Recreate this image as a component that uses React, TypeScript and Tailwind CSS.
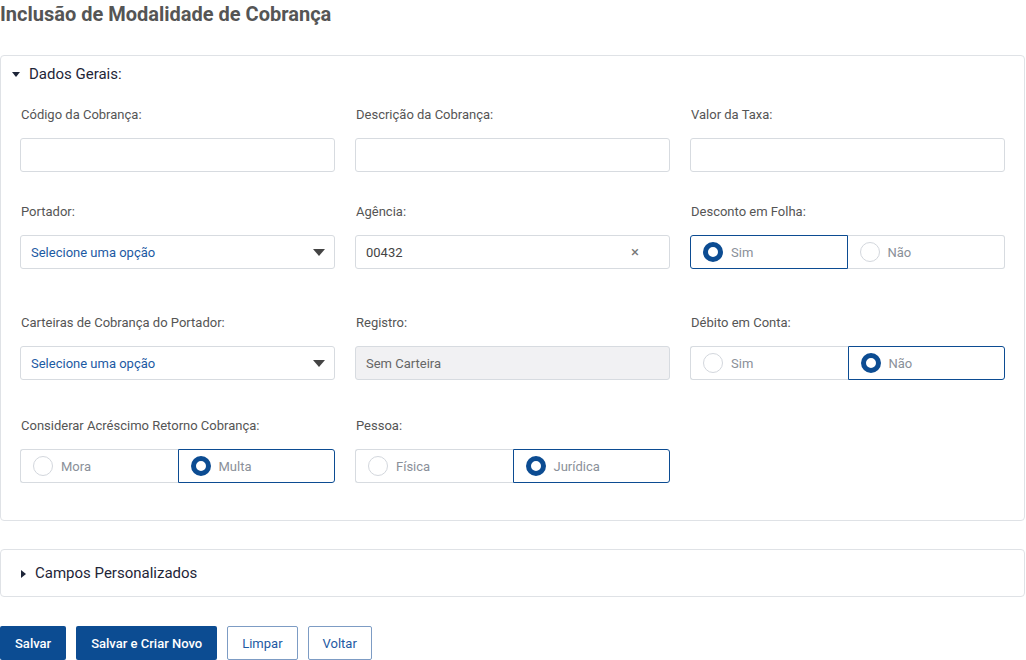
import { useState } from 'react';

type Option = { value: string; label: string };

const BLUE = '#0c4c92';

function Label({ children }: { children: React.ReactNode }) {
  return (
    <label className="block h-4 pl-[1px] text-[13px] leading-4 text-[#555]">
      {children}
    </label>
  );
}

function TextInput({ value = '', disabled }: { value?: string; disabled?: boolean }) {
  return (
    <div
      className={`mt-[15px] flex h-[34px] items-center rounded-[3px] border border-[#d7dbe0] px-[10px] pt-[1px] text-[13px] ${
        disabled ? 'bg-[#f1f1f3] text-[#666]' : 'bg-white text-[#444]'
      }`}
    >
      {value}
    </div>
  );
}

function ClearInput({ value }: { value: string }) {
  return (
    <div className="mt-[15px] flex h-[34px] items-center justify-between rounded-[3px] border border-[#d7dbe0] bg-white pl-[10px] pr-[30px] pt-[1px] text-[13px] text-[#444]">
      <span>{value}</span>
      <span className="text-[15px] leading-none text-[#777]">×</span>
    </div>
  );
}

function Select({ placeholder }: { placeholder: string }) {
  return (
    <div className="mt-[15px] flex h-[34px] items-center justify-between rounded-[3px] border border-[#d7dbe0] bg-white pl-[10px] pr-[9px] pt-[1px] text-[13px] text-[#1d5aa3]">
      <span>{placeholder}</span>
      <svg width="12" height="7" viewBox="0 0 12 7">
        <path d="M0 0h12L6 7z" fill="#444" />
      </svg>
    </div>
  );
}

function Radio({ checked }: { checked: boolean }) {
  return checked ? (
    <span className="h-[20px] w-[20px] shrink-0 rounded-full border-[5px] border-[#0c4c92] bg-white" />
  ) : (
    <span className="h-[20px] w-[20px] shrink-0 rounded-full border border-[#d3d7dd] bg-white" />
  );
}

function RadioGroup({ options, initial }: { options: Option[]; initial: string }) {
  const [value, setValue] = useState(initial);
  return (
    <div className="mt-[15px] grid h-[34px] grid-cols-2 text-[13px] text-[#8a9099]">
      {options.map((opt, i) => {
        const checked = opt.value === value;
        return (
          <button
            key={opt.value}
            type="button"
            onClick={() => setValue(opt.value)}
            className={`flex items-center gap-[8px] border pl-[12px] ${
              i === 0 ? 'rounded-l-[3px]' : 'rounded-r-[3px]'
            } ${
              checked
                ? 'border-[#0c4c92]'
                : i === 0
                  ? 'border-[#d7dbe0] border-r-0'
                  : 'border-[#d7dbe0] border-l-0'
            }`}
          >
            <Radio checked={checked} />
            <span className="pt-[2px]">{opt.label}</span>
          </button>
        );
      })}
    </div>
  );
}

const simNao: Option[] = [
  { value: 'S', label: 'Sim' },
  { value: 'N', label: 'Não' },
];

export default function App() {
  const [geraisOpen, setGeraisOpen] = useState(true);

  return (
    <div className="h-[660px] w-[1026px] overflow-hidden bg-white font-['Roboto',sans-serif]">
      <h1 className="h-[30px] text-[20px] font-bold leading-[28px] text-[#555]">
        Inclusão de Modalidade de Cobrança
      </h1>

      <section className="mt-[25px] w-[1025px] rounded-[4px] border border-[#dfe2e6]">
        <button
          type="button"
          onClick={() => setGeraisOpen((o) => !o)}
          className="mt-2 flex h-[20px] items-center gap-[9px] pl-[11px] pt-[1px] text-[15px] text-[#1e2538]"
        >
          <svg width="8" height="5" viewBox="0 0 8 5">
            <path d="M0 0h8L4 5z" fill="#1e2538" />
          </svg>
          Dados Gerais:
        </button>

        {geraisOpen && (
          <div className="px-[19px] pb-[37px] pt-[23px]">
            <div className="grid grid-cols-3 gap-x-5">
              <div>
                <Label>Código da Cobrança:</Label>
                <TextInput />
              </div>
              <div>
                <Label>Descrição da Cobrança:</Label>
                <TextInput />
              </div>
              <div>
                <Label>Valor da Taxa:</Label>
                <TextInput />
              </div>
            </div>

            <div className="mt-[32px] grid grid-cols-3 gap-x-5">
              <div>
                <Label>Portador:</Label>
                <Select placeholder="Selecione uma opção" />
              </div>
              <div>
                <Label>Agência:</Label>
                <ClearInput value="00432" />
              </div>
              <div>
                <Label>Desconto em Folha:</Label>
                <RadioGroup options={simNao} initial="S" />
              </div>
            </div>

            <div className="mt-[46px] grid grid-cols-3 gap-x-5">
              <div>
                <Label>Carteiras de Cobrança do Portador:</Label>
                <Select placeholder="Selecione uma opção" />
              </div>
              <div>
                <Label>Registro:</Label>
                <TextInput value="Sem Carteira" disabled />
              </div>
              <div>
                <Label>Débito em Conta:</Label>
                <RadioGroup options={simNao} initial="N" />
              </div>
            </div>

            <div className="mt-[38px] grid grid-cols-3 gap-x-5">
              <div>
                <Label>Considerar Acréscimo Retorno Cobrança:</Label>
                <RadioGroup
                  options={[
                    { value: 'mora', label: 'Mora' },
                    { value: 'multa', label: 'Multa' },
                  ]}
                  initial="multa"
                />
              </div>
              <div>
                <Label>Pessoa:</Label>
                <RadioGroup
                  options={[
                    { value: 'F', label: 'Física' },
                    { value: 'J', label: 'Jurídica' },
                  ]}
                  initial="J"
                />
              </div>
            </div>
          </div>
        )}
      </section>

      <section className="mt-[28px] flex h-[48px] w-[1025px] items-center gap-[9px] rounded-[4px] border border-[#dfe2e6] pl-[20px] pt-[1px] text-[15px] text-[#1e2538]">
        <svg width="5" height="8" viewBox="0 0 5 8">
          <path d="M0 0v8l5-4z" fill="#1e2538" />
        </svg>
        Campos Personalizados
      </section>

      <div className="mt-[29px] flex gap-[10px] text-[13px]">
        <button
          type="button"
          className="h-[34px] rounded-[2px] px-[15px] pt-[1px] font-medium text-white"
          style={{ backgroundColor: BLUE }}
        >
          Salvar
        </button>
        <button
          type="button"
          className="h-[34px] rounded-[2px] bg-[#0c4c92] px-[15px] pt-[1px] font-medium text-white"
        >
          Salvar e Criar Novo
        </button>
        <button
          type="button"
          className="h-[34px] rounded-[2px] border border-[#7d9cc4] bg-white px-[14px] pt-[1px] text-[#1d5aa3]"
        >
          Limpar
        </button>
        <button
          type="button"
          className="h-[34px] rounded-[2px] border border-[#7d9cc4] bg-white px-[14px] pt-[1px] text-[#1d5aa3]"
        >
          Voltar
        </button>
      </div>
    </div>
  );
}
